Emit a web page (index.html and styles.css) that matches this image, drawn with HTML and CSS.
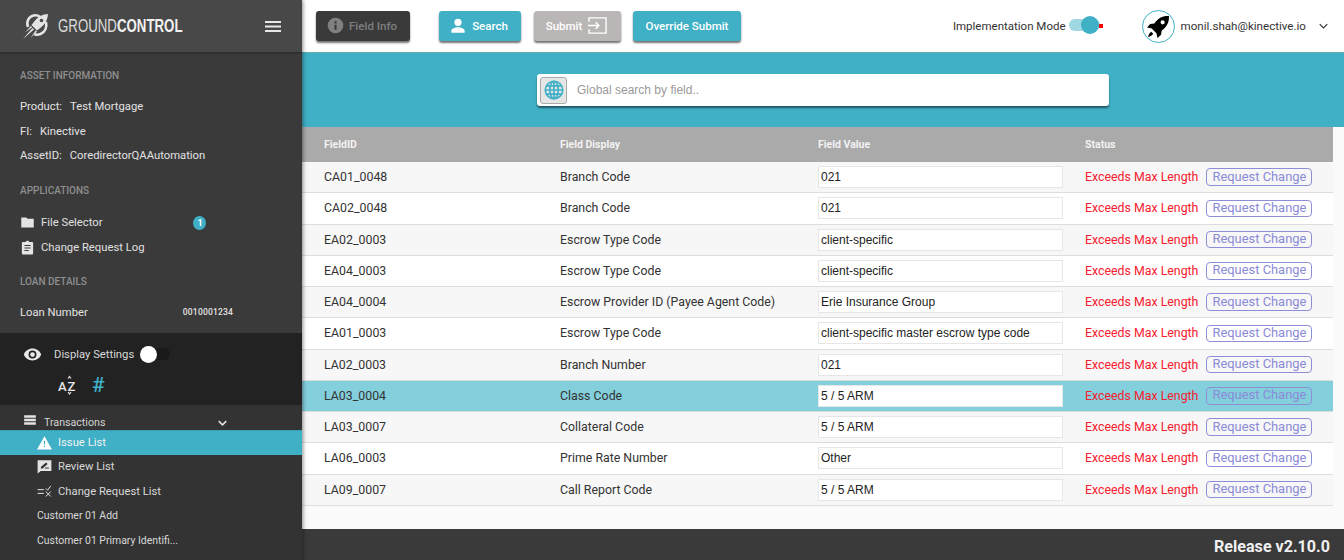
FILE: index.html
```html
<!DOCTYPE html>
<html lang="en">
<head>
<meta charset="utf-8">
<title>GroundControl</title>
<link rel="stylesheet" href="styles.css">
</head>
<body>
<div class="app">
  <aside class="sidebar">
    <div class="brand">
      <svg class="brand-logo" viewBox="0 0 26 26" width="26" height="26"><path fill="none" stroke="#e4e4e4" stroke-width="2.6" d="M5 14C3 9 5.500 3.500 10.500 2.500c3-.6 5 .2 6.500 1.500M23 9c1 5-.5 10-5.500 12-2.500 1-4.500.8-6 .2"/><path fill="#e4e4e4" d="M25 1c-5.500.2-9.500 2.500-13 6.500l-3.500 4.500 5.500 5.500 4.500-3.500c4-3.500 6.300-7.500 6.500-13zM0 26l9.500-11 1.500 1.500zM2 19.500l6-6.500 1.200 1.200zM7.500 25l6.500-6.500-1.200-1.200z"/><circle cx="18.500" cy="7.500" r="1.800" fill="#484848"/></svg>
      <span class="brand-name">GROUND<b>CONTROL</b></span>
      <svg class="burger" viewBox="0 0 16 11" width="16" height="11"><path fill="#e8e8e8" d="M0 0h16v2H0zM0 4.500h16v2H0zM0 9h16v2H0z"/></svg>
    </div>
    <div class="side-info">
      <h3 class="side-title">ASSET INFORMATION</h3>
      <p class="info-line"><span>Product:</span><span>Test Mortgage</span></p>
      <p class="info-line"><span>FI:</span><span>Kinective</span></p>
      <p class="info-line"><span>AssetID:</span><span>CoredirectorQAAutomation</span></p>
      <h3 class="side-title apps">APPLICATIONS</h3>
      <div class="app-link">
        <svg viewBox="0 0 24 24" width="15" height="15"><path fill="#e4e4e4" d="M10 4H2v16h20V6H12z"/></svg>
        <span>File Selector</span><i class="badge">1</i>
      </div>
      <div class="app-link">
        <svg viewBox="0 0 24 24" width="15" height="15"><path fill="#e4e4e4" d="M19 3h-4.200C14.400 1.800 13.300 1 12 1s-2.400.8-2.800 2H5c-1.100 0-2 .9-2 2v16c0 1.100.9 2 2 2h14c1.100 0 2-.9 2-2V5c0-1.100-.9-2-2-2zM7 8h10v1.500H7zm0 4h10v1.500H7zm0 4h7v1.500H7z"/></svg>
        <span>Change Request Log</span>
      </div>
      <h3 class="side-title loan">LOAN DETAILS</h3>
      <div class="loan-line"><span>Loan Number</span><b>0010001234</b></div>
    </div>
    <div class="display">
      <div class="display-row">
        <svg viewBox="0 0 24 24" width="19" height="19"><path fill="#e8e8e8" d="M12 4.500C7 4.500 2.700 7.600 1 12c1.700 4.400 6 7.500 11 7.500s9.300-3.100 11-7.500c-1.700-4.400-6-7.500-11-7.500zM12 17a5 5 0 1 1 0-10 5 5 0 0 1 0 10zm0-8a3 3 0 1 0 0 6 3 3 0 0 0 0-6z"/></svg>
        <span class="display-label">Display Settings</span>
        <span class="dark-switch"><i></i></span>
      </div>
      <div class="display-icons">
        <svg viewBox="0 0 20 20" width="20" height="20"><text x="0" y="15.500" class="az-a">A</text><text x="9.500" y="15.500" class="az-z">Z</text><path fill="none" stroke="#e6e6e6" stroke-width="1.200" d="M10 3.500 11.500 1.500l1.500 2M10 17l1.500 2 1.500-2"/></svg>
        <span class="hash">#</span>
      </div>
    </div>
    <nav class="nav">
      <div class="nav-group">
        <svg viewBox="0 0 24 24" width="14" height="14"><path fill="#e4e4e4" d="M2 4h20v4H2zm0 6h20v4H2zm0 6h20v4H2z"/></svg>
        <span>Transactions</span>
        <svg class="nav-chev" viewBox="0 0 12 8" width="9" height="6"><path fill="none" stroke="#e4e4e4" stroke-width="2" d="M1 1.500l5 5 5-5"/></svg>
      </div>
      <a class="nav-item active"><svg viewBox="0 0 24 24" width="15" height="15"><path fill="#fff" d="M12 2 0 23h24zm1 17h-2v-2h2zm0-4h-2V9h2z"/></svg>Issue List</a>
      <a class="nav-item"><svg viewBox="0 0 24 24" width="15" height="15"><path fill="#e4e4e4" d="M1 2h22v17H6l-5 4zm5 13h3l8-7-2.500-2.500-8 7zm6 0h7v-1.500h-5.500z"/></svg>Review List</a>
      <a class="nav-item"><svg viewBox="0 0 24 24" width="15" height="15"><path fill="none" stroke="#e4e4e4" stroke-width="1.600" d="M1 9h10M1 15h10M14 12l8 8M22 12l-8 8M14 7l3 3 5-7"/></svg>Change Request List</a>
      <a class="nav-item plain">Customer 01 Add</a>
      <a class="nav-item plain">Customer 01 Primary Identifi...</a>
    </nav>
  </aside>
  <main class="main">
    <header class="topbar">
      <button class="btn btn-dark"><svg viewBox="0 0 24 24" width="17" height="17"><path fill="#808080" d="M12 1a11 11 0 1 0 0 22 11 11 0 0 0 0-22zm1.500 17h-3v-7h3zm0-9h-3V6h3z"/></svg>Field Info</button>
      <button class="btn btn-teal btn-search"><svg viewBox="0 0 24 24" width="16" height="16"><path fill="#fff" d="M12 12a5.500 5.500 0 1 0 0-11 5.500 5.500 0 0 0 0 11zm0 2c-4 0-10 2-10 5.500V22h20v-2.500C22 16 16 14 12 14z"/></svg>Search</button>
      <button class="btn btn-grey">Submit<svg viewBox="0 0 20 20" width="19" height="19"><path fill="none" stroke="#fff" stroke-width="1.500" d="M1 6V2h18v16H1v-4M0 10h11M8 6.500l3.500 3.500L8 13.500"/></svg></button>
      <button class="btn btn-teal btn-override">Override Submit</button>
      <div class="mode">
        <span>Implementation Mode</span>
        <span class="mode-switch"><i></i><em></em></span>
      </div>
      <div class="user">
        <span class="avatar"><svg viewBox="0 0 24 24" width="25" height="25"><path fill="#000" d="M22 2c-6-.4-10.500 2-14 7l-4 .5L1 13l4.500 1 4.500 4.500L11 23l3.500-3 .5-4c5-3.500 7.400-8 7-14zm-6 8a2 2 0 1 1 0-4 2 2 0 0 1 0 4zM5 17c-1.500 1-2.500 2.500-3 5 2.500-.5 4-1.500 5-3z"/></svg></span>
        <span class="user-mail">monil.shah@kinective.io</span>
        <svg viewBox="0 0 12 8" width="9" height="6"><path fill="none" stroke="#333" stroke-width="1.600" d="M1 1.500l5 5 5-5"/></svg>
      </div>
    </header>
    <section class="band">
      <div class="global">
        <span class="globe"><svg viewBox="0 0 24 24" width="20" height="20"><g fill="none" stroke="#3fb0c6" stroke-width="2"><circle cx="12" cy="12" r="10.500"/><ellipse cx="12" cy="12" rx="5" ry="10.500"/><path d="M12 1.500v21M1.500 12h21M3 7h18M3 17h18"/></g></svg></span>
        <span class="global-text">Global search by field..</span>
      </div>
    </section>
    <section class="table">
      <div class="row head"><span>FieldID</span><span>Field Display</span><span>Field Value</span><span>Status</span></div>
      <div class="row"><span>CA01_0048</span><span>Branch Code</span><input class="val" value="021"><span class="status"><em>Exceeds Max Length</em><button class="req">Request Change</button></span></div>
      <div class="row"><span>CA02_0048</span><span>Branch Code</span><input class="val" value="021"><span class="status"><em>Exceeds Max Length</em><button class="req">Request Change</button></span></div>
      <div class="row"><span>EA02_0003</span><span>Escrow Type Code</span><input class="val" value="client-specific"><span class="status"><em>Exceeds Max Length</em><button class="req">Request Change</button></span></div>
      <div class="row"><span>EA04_0003</span><span>Escrow Type Code</span><input class="val" value="client-specific"><span class="status"><em>Exceeds Max Length</em><button class="req">Request Change</button></span></div>
      <div class="row"><span>EA04_0004</span><span>Escrow Provider ID (Payee Agent Code)</span><input class="val" value="Erie Insurance Group"><span class="status"><em>Exceeds Max Length</em><button class="req">Request Change</button></span></div>
      <div class="row"><span>EA01_0003</span><span>Escrow Type Code</span><input class="val" value="client-specific master escrow type code"><span class="status"><em>Exceeds Max Length</em><button class="req">Request Change</button></span></div>
      <div class="row"><span>LA02_0003</span><span>Branch Number</span><input class="val" value="021"><span class="status"><em>Exceeds Max Length</em><button class="req">Request Change</button></span></div>
      <div class="row selected"><span>LA03_0004</span><span>Class Code</span><input class="val" value="5 / 5 ARM"><span class="status"><em>Exceeds Max Length</em><button class="req">Request Change</button></span></div>
      <div class="row"><span>LA03_0007</span><span>Collateral Code</span><input class="val" value="5 / 5 ARM"><span class="status"><em>Exceeds Max Length</em><button class="req">Request Change</button></span></div>
      <div class="row"><span>LA06_0003</span><span>Prime Rate Number</span><input class="val" value="Other"><span class="status"><em>Exceeds Max Length</em><button class="req">Request Change</button></span></div>
      <div class="row"><span>LA09_0007</span><span>Call Report Code</span><input class="val" value="5 / 5 ARM"><span class="status"><em>Exceeds Max Length</em><button class="req">Request Change</button></span></div>
    </section>
    <footer class="footer">Release v2.10.0</footer>
  </main>
</div>
</body>
</html>
```
FILE: styles.css
```css
* { box-sizing: border-box; }
html, body { margin: 0; height: 100%; overflow: hidden; }
body { font-family: Roboto, "Liberation Sans", sans-serif; font-size: 12px; color: #333; background: #fafafa; }
.app { display: flex; height: 560px; }

/* sidebar */
.sidebar { width: 302px; flex: none; display: flex; flex-direction: column; background: #3a3a3a; color: #e2e2e2; box-shadow: 1px 0 4px rgba(0,0,0,.45); z-index: 2; overflow: hidden; }
.brand { height: 52px; flex: none; display: flex; align-items: center; padding: 0 21px 0 23px; background: #484848; box-shadow: 0 1px 2px rgba(0,0,0,.35); }
.brand-name { margin-left: 9px; width: 124px; font-family: "Liberation Sans", sans-serif; font-size: 18.500px; color: #dcdcdc; white-space: nowrap; transform: scaleX(.717); transform-origin: left center; }
.brand-name b { color: #f2f2f2; }
.burger { margin-left: auto; }
.side-info { height: 281px; flex: none; padding: 18px 20px 0; font-size: 11.250px; }
.side-title { margin: 0; font-size: 10px; line-height: 12px; font-weight: 500; color: #8e8e8e; text-transform: uppercase; }
.info-line { margin: 0; height: 24.500px; display: flex; align-items: center; gap: 8px; font-size: 11.250px; color: #e2e2e2; }
.side-title + .info-line { margin-top: 12.500px; }
.side-title.apps { margin-top: 16.500px; }
.app-link { height: 24.500px; display: flex; align-items: center; gap: 6px; color: #e0e0e0; }
.side-title.apps + .app-link { margin-top: 14px; }
.badge { margin-left: 85px; width: 13px; height: 14px; border-radius: 50%; background: #3fb0c6; color: #fff; font-style: normal; font-size: 9px; font-weight: 700; display: flex; align-items: center; justify-content: center; }
.side-title.loan { margin-top: 16px; }
.loan-line { margin-top: 18px; display: flex; align-items: center; color: #e2e2e2; }
.loan-line b { margin-left: 95px; font-size: 8.500px; font-weight: 500; letter-spacing: .2px; }
.display { height: 72px; flex: none; background: #222; padding: 11px 0 0 23px; }
.display-row { display: flex; align-items: center; height: 20px; color: #d8d8d8; }
.display-label { margin-left: 12px; font-size: 11.250px; }
.dark-switch { position: relative; width: 29px; height: 12px; margin-left: 7px; background: #1a1a1a; border-radius: 6px; }
.dark-switch i { position: absolute; left: -1px; top: -2px; width: 17px; height: 17px; border-radius: 50%; background: #fff; }
.display-icons { display: flex; align-items: center; gap: 14px; margin: 11px 0 0 35px; }
.az-a, .az-z { font-size: 13px; font-weight: 500; fill: #e6e6e6; font-family: Roboto, sans-serif; }
.hash { color: #3fb0c6; font-size: 21px; line-height: 20px; font-weight: 500; }
.nav { flex: 1; background: #333; }
.nav-group { height: 25px; display: flex; align-items: center; padding: 10px 0 0 23px; font-size: 10.650px; color: #d4d4d4; }
.nav-group span { margin-left: 7px; }
.nav-group > svg:first-child { margin-top: -6px; }
.nav-chev { margin-left: 113px; }
.nav-item { height: 24.500px; display: flex; align-items: center; gap: 6px; padding-left: 37px; font-size: 11.250px; color: #d8d8d8; }
.nav-item.active { background: #3fb0c6; color: #f2f2f2; border-top: 1px solid #3a9fb2; }
.nav-item.plain { font-size: 10.450px; }

/* main */
.main { flex: 1; display: flex; flex-direction: column; min-width: 0; }
.topbar { height: 52px; flex: none; display: flex; align-items: center; padding-left: 14px; background: #fff; }
.btn { height: 30px; border: 0; border-radius: 3px; display: flex; align-items: center; justify-content: center; font: 500 11.500px Roboto, sans-serif; color: #fff; box-shadow: 0 2px 2px rgba(0,0,0,.55); padding: 0; margin-top: -1px; }
.btn-dark { width: 94px; background: #3a3a3a; color: #7e7e7e; gap: 5px; padding-right: 2px; }
.btn-teal { background: #3fb0c6; }
.btn-search { width: 82px; margin-left: 29px; gap: 6px; padding-right: 2px; }
.btn-grey { width: 87px; margin-left: 13px; background: #bab6b6; gap: 6px; padding-right: 2px; }
.btn-override { width: 108px; margin-left: 12px; }
.mode { margin-left: auto; display: flex; align-items: center; gap: 3px; font-size: 11.500px; color: #333; }
.mode-switch { position: relative; width: 31px; height: 12px; border-radius: 6px; background: #9fd8e3; margin-top: -3px; }
.mode-switch i { position: absolute; right: 1px; top: -3px; width: 18px; height: 18px; border-radius: 50%; background: #3fb0c6; }
.mode-switch em { position: absolute; right: -3px; top: 5px; width: 4px; height: 4px; background: #f00; }
.user { display: flex; align-items: center; margin: 0 16px 0 42px; }
.avatar { width: 33px; height: 33px; border-radius: 50%; border: 1px solid #3fb0c6; display: flex; align-items: center; justify-content: center; background: #fff; }
.user-mail { margin: 0 13px 0 6px; font-size: 11.600px; }
.band { height: 75px; flex: none; background: #3fb0c6; border-top: 1px solid #6aa; display: flex; padding: 21px 0 0 235px; }
.global { width: 572px; height: 32px; display: flex; align-items: center; background: #fff; border-radius: 3px; box-shadow: 0 2px 2px rgba(0,0,0,.5); padding-left: 3px; }
.globe { width: 27px; height: 27px; display: flex; align-items: center; justify-content: center; background: #e6e6e6; border: 1px solid #aaa; border-radius: 3px; }
.global-text { margin-left: 10px; font: 12px "Liberation Sans", sans-serif; color: #9a9a9a; }
.table { flex: 1; width: 1031px; }
.row { display: grid; grid-template-columns: 236px 258px 245px 1fr; align-items: center; height: 31.250px; padding-left: 22px; border-bottom: 1px solid #ddd; background: #fff; font-size: 12.350px; color: #333; }
.row:nth-child(even) { background: #f7f7f7; }
.row.head { height: 35px; background: #aaa; border: 0; color: #f2f2f2; font-size: 10.500px; font-weight: 700; grid-template-columns: 236px 258px 267px 1fr; }
.row.selected { background: #84cfdc; }
.val { width: 245px; height: 22px; padding: 0 2px; border: 1px solid #e6e6e6; background: #fff; font: 12px "Liberation Sans", sans-serif; color: #222; outline: 0; }
.status { display: flex; align-items: center; padding-left: 22px; white-space: nowrap; }
.status em { font-style: normal; color: #f6202e; font-size: 12.350px; }
.req { margin-left: 8px; width: 106px; height: 17.500px; padding: 0 0 1px; border: 1px solid #8e8ed8; border-radius: 4px; background: transparent; color: #8a8ad8; font: 12.900px Roboto, sans-serif; line-height: 14px; }
.footer { height: 31px; flex: none; background: #3a3a3a; color: #f0f0f0; text-align: right; padding-right: 14px; font-size: 16.100px; line-height: 36px; font-weight: 700; }
```
